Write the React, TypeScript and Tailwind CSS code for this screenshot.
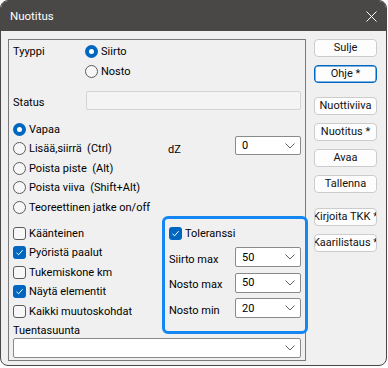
import React from "react";

const Radio = ({ checked }: { checked?: boolean }) =>
  checked ? (
    <span className="w-[13px] h-[13px] shrink-0 rounded-full bg-[#0067c0] flex items-center justify-center">
      <span className="w-[5px] h-[5px] rounded-full bg-white" />
    </span>
  ) : (
    <span className="w-[13px] h-[13px] shrink-0 rounded-full border border-[#5c5c5c] bg-[#f7f7f7]" />
  );

const Check = ({ checked }: { checked?: boolean }) =>
  checked ? (
    <span className="w-[13px] h-[13px] shrink-0 rounded-[3px] bg-[#0067c0] flex items-center justify-center">
      <svg width="9" height="9" viewBox="0 0 9 9">
        <polyline points="1.5,4.8 3.6,6.8 7.6,2.2" fill="none" stroke="white" strokeWidth="1" />
      </svg>
    </span>
  ) : (
    <span className="w-[13px] h-[13px] shrink-0 rounded-[3px] border border-[#5c5c5c] bg-[#f7f7f7]" />
  );

const Chevron = () => (
  <svg width="10" height="6" viewBox="0 0 10 6" className="shrink-0">
    <polyline points="0.5,0.5 5,5 9.5,0.5" fill="none" stroke="#606060" strokeWidth="1" />
  </svg>
);

const Select = ({ value, className }: { value: string; className: string }) => (
  <div
    className={
      "flex items-center justify-between bg-white border border-[#8a8a8a] rounded-[2px] pl-[6px] pr-[5px] shrink-0 " +
      className
    }
  >
    <span className="leading-none">{value}</span>
    <Chevron />
  </div>
);

const Btn = ({ label, primary, className }: { label: string; primary?: boolean; className?: string }) => (
  <div
    className={
      "w-[63px] h-[18px] rounded-[4px] bg-[#fdfdfd] border overflow-hidden whitespace-nowrap text-center leading-[16px] text-[#111] " +
      (primary ? "border-[#0067c0] shadow-[inset_0_0_0_0.5px_#0067c0] " : "border-[#cccccc] ") +
      (className || "")
    }
  >
    <span className="inline-block mx-[-20px]">{label}</span>
  </div>
);

export default function App() {
  return (
    <div className="w-[388px] h-[368px] bg-white font-['Roboto',sans-serif] text-[11px] text-black leading-[15px]">
      <div className="w-[387px] h-[366px] flex flex-col rounded-[8px] border border-[#4a4846] overflow-hidden bg-[#f0f0f0]">
        {/* title bar */}
        <div className="h-[30px] shrink-0 bg-[#4a4846] flex items-center justify-between pl-[9px] pr-[9px]">
          <span className="text-white text-[11.5px]">Nuotitus</span>
          <svg width="11" height="11" viewBox="0 0 11 11">
            <line x1="0.5" y1="0.5" x2="10.5" y2="10.5" stroke="white" strokeWidth="1" />
            <line x1="10.5" y1="0.5" x2="0.5" y2="10.5" stroke="white" strokeWidth="1" />
          </svg>
        </div>

        {/* body */}
        <div className="flex pl-[7px] pt-[8px]">
          {/* group box */}
          <div className="w-[298px] h-[322px] shrink-0 border border-[#7a7a7a] flex flex-col pl-[4px] pr-[4px] pt-[1px]">
            {/* Tyyppi */}
            <div className="flex items-center h-[20px]">
              <span className="w-[72px] shrink-0">Tyyppi</span>
              <Radio checked />
              <span className="ml-[3px]">Siirto</span>
            </div>
            <div className="flex items-center h-[20px] mt-[0.5px]">
              <span className="w-[72px] shrink-0" />
              <Radio />
              <span className="ml-[3px]">Nosto</span>
            </div>
            {/* Status */}
            <div className="flex items-center h-[19px] mt-[9.5px]">
              <span className="w-[73px] shrink-0 pt-[4px]">Status</span>
              <div className="w-[215px] h-[19px] border border-[#d4d4d4] bg-[#f4f4f4] rounded-[2px]" />
            </div>

            {/* radio list */}
            <div className="flex flex-col mt-[9.5px]">
              <div className="flex items-center h-[19.5px]">
                <Radio checked />
                <span className="ml-[3px]">Vapaa</span>
              </div>
              <div className="flex items-center h-[19.5px]">
                <div className="w-[155px] shrink-0 flex items-center">
                  <Radio />
                  <span className="ml-[3px] whitespace-pre">Lisää,siirrä  (Ctrl)</span>
                </div>
                <span className="w-[67px] shrink-0 pt-[1px]">dZ</span>
                <Select value="0" className="w-[66px] h-[19px] mb-[6px]" />
              </div>
              <div className="flex items-center h-[19.5px]">
                <Radio />
                <span className="ml-[3px] whitespace-pre">Poista piste  (Alt)</span>
              </div>
              <div className="flex items-center h-[19.5px]">
                <Radio />
                <span className="ml-[3px] whitespace-pre">Poista viiva  (Shift+Alt)</span>
              </div>
              <div className="flex items-center h-[19.5px]">
                <Radio />
                <span className="ml-[3px]">Teoreettinen jatke on/off</span>
              </div>
            </div>

            {/* checkboxes + tolerance */}
            <div className="flex items-start mt-[-1px]">
              <div className="w-[149px] shrink-0 flex flex-col pt-[7.5px]">
                {[
                  ["Käänteinen", false],
                  ["Pyöristä paalut", true],
                  ["Tukemiskone km", false],
                  ["Näytä elementit", true],
                  ["Kaikki muutoskohdat", false],
                ].map(([t, c]) => (
                  <div key={t as string} className="flex items-center h-[19.5px]">
                    <Check checked={c as boolean} />
                    <span className="ml-[3px]">{t as string}</span>
                  </div>
                ))}
              </div>
              <div className="w-[146px] h-[118px] shrink-0 mb-[-14px] border-[3px] border-[#1487f2] rounded-[6px] flex flex-col pl-[4px] pr-[4px]">
                <div className="flex items-center h-[19px] mt-[5px]">
                  <Check checked />
                  <span className="ml-[3px]">Toleranssi</span>
                </div>
                <div className="flex items-center h-[20px] mt-[4px]">
                  <span className="w-[66px] shrink-0 pt-[4px]">Siirto max</span>
                  <Select value="50" className="w-[66px] h-[20px]" />
                </div>
                <div className="flex items-center h-[20px] mt-[5.5px]">
                  <span className="w-[66px] shrink-0 pt-[4px]">Nosto max</span>
                  <Select value="50" className="w-[66px] h-[20px]" />
                </div>
                <div className="flex items-center h-[20px] mt-[5.5px]">
                  <span className="w-[66px] shrink-0 pt-[4px]">Nosto min</span>
                  <Select value="20" className="w-[66px] h-[20px]" />
                </div>
              </div>
            </div>

            {/* Tuentasuunta */}
            <div className="mt-[2px] h-[15px]">Tuentasuunta</div>
            <Select value="" className="w-[288px] h-[20px]" />
          </div>

          {/* buttons */}
          <div className="flex flex-col ml-[8px]">
            <Btn label="Sulje" />
            <Btn label="Ohje *" primary className="mt-[8px]" />
            <Btn label="Nuottiviiva" className="mt-[14px]" />
            <Btn label="Nuotitus *" className="mt-[8px]" />
            <Btn label="Avaa" className="mt-[8px]" />
            <Btn label="Tallenna" className="mt-[8px]" />
            <Btn label="Kirjoita TKK *" className="mt-[15px]" />
            <Btn label="Kaarilistaus *" className="mt-[8px]" />
          </div>
        </div>
      </div>
    </div>
  );
}
